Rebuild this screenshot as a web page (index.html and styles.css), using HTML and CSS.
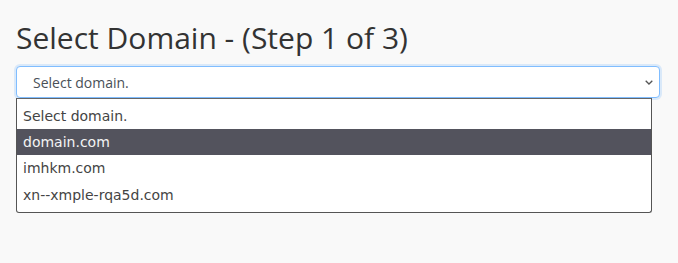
FILE: index.html
```html
<!DOCTYPE html>
<html>
<head>
<meta charset="utf-8">
<link rel="stylesheet" href="styles.css">
</head>
<body>
<div class="page">
  <h1 class="title">Select Domain - (Step 1 of 3)</h1>
  <div class="field">
    <div class="select">
      <span class="select-text">Select domain.</span>
      <svg class="chev" width="8" height="5" viewBox="0 0 8 5"><path d="M0.7 0.7 L4 4 L7.3 0.7" fill="none" stroke="#555" stroke-width="1.3"/></svg>
    </div>
    <ul class="list">
      <li class="opt placeholder">Select domain.</li>
      <li class="opt active">domain.com</li>
      <li class="opt">imhkm.com</li>
      <li class="opt">xn--xmple-rqa5d.com</li>
    </ul>
  </div>
</div>
</body>
</html>
```

FILE: styles.css
```css
html, body {
  margin: 0;
  padding: 0;
  background: #f9f9f9;
}
.page {
  padding: 20px 18px 0 16px;
  font-family: "Open Sans", sans-serif;
}
.title {
  margin: 0 0 10px 0;
  font-size: 30px;
  font-weight: 400;
  color: #333;
  line-height: 36px;
}
.field {
  display: flex;
  flex-direction: column;
}
.select {
  height: 32px;
  box-sizing: border-box;
  border: 1px solid #80bdff;
  border-radius: 4px;
  background: #fff;
  box-shadow: 0 0 0 2px rgba(0, 123, 255, 0.12);
  display: flex;
  align-items: center;
  justify-content: space-between;
  padding: 0 6px 0 16px;
  font-size: 14px;
  color: #495057;
}
.chev {
  display: block;
}
.list {
  list-style: none;
  margin: 0;
  padding: 3px 0 3px 0;
  width: 636px;
  box-sizing: border-box;
  border: 1px solid #555;
  border-top-color: #666;
  border-radius: 0 0 3px 3px;
  background: #fff;
  font-family: "DejaVu Sans", Verdana, sans-serif;
  font-size: 14px;
  color: #444;
}
.opt {
  height: 26.7px;
  box-sizing: border-box;
  line-height: 26px;
  padding-left: 6px;
}
.opt.placeholder {
  padding-top: 2px;
  line-height: 24.7px;
}
.opt.active {
  background: #53535d;
  color: #f4f4f4;
}
```
